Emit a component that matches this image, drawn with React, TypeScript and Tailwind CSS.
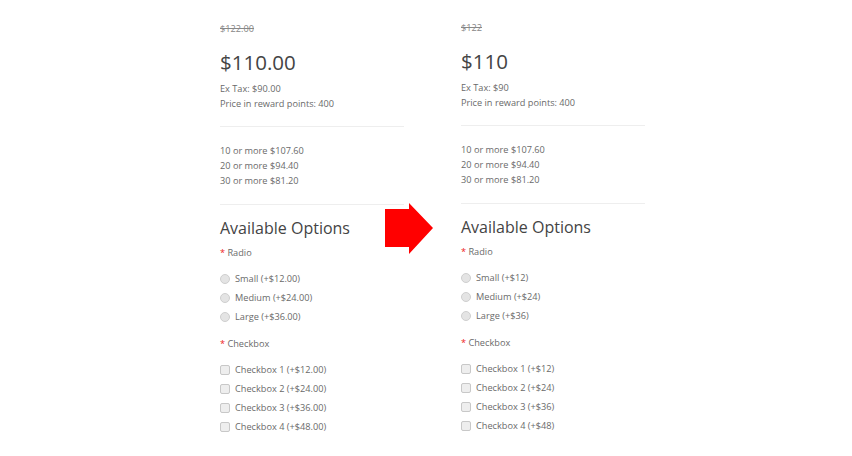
import React from "react";

type Col = {
  old: string;
  price: string;
  tax: string;
  radios: string[];
  checks: string[];
};

const cols: Col[] = [
  {
    old: "$122.00",
    price: "$110.00",
    tax: "$90.00",
    radios: ["Small (+$12.00)", "Medium (+$24.00)", "Large (+$36.00)"],
    checks: [
      "Checkbox 1 (+$12.00)",
      "Checkbox 2 (+$24.00)",
      "Checkbox 3 (+$36.00)",
      "Checkbox 4 (+$48.00)",
    ],
  },
  {
    old: "$122",
    price: "$110",
    tax: "$90",
    radios: ["Small (+$12)", "Medium (+$24)", "Large (+$36)"],
    checks: [
      "Checkbox 1 (+$12)",
      "Checkbox 2 (+$24)",
      "Checkbox 3 (+$36)",
      "Checkbox 4 (+$48)",
    ],
  },
];

function Column({ c, shift }: { c: Col; shift: boolean }) {
  return (
    <div className={`w-[184px] flex flex-col ${shift ? "-mt-px" : ""}`}>
      <div className="text-[9.2px] leading-[15px] text-[#888] line-through">{c.old}</div>
      <div className="mt-[12px] text-[20.5px] leading-[28px] text-[#444]">{c.price}</div>
      <div className="mt-[5px] text-[9.2px] leading-[15px]">Ex Tax: {c.tax}</div>
      <div className="text-[9.2px] leading-[15px]">Price in reward points: 400</div>
      <div className="mt-[15px] h-px bg-[#eeeeee]" />
      <div className="mt-[16px] text-[9.2px] leading-[15px]">10 or more $107.60</div>
      <div className="text-[9.2px] leading-[15px]">20 or more $94.40</div>
      <div className="text-[9.2px] leading-[15px]">30 or more $81.20</div>
      <div className="mt-[16px] h-px bg-[#eeeeee]" />
      <div className="mt-[11px] text-[16px] leading-[24px] text-[#444]">Available Options</div>
      <div className="mt-[5px] text-[9.2px] leading-[15px]">
        <span className="text-[#e22]">*</span> Radio
      </div>
      <div className="mt-[9px] flex flex-col">
        {c.radios.map((r) => (
          <div key={r} className="flex items-center h-[19px] text-[9.2px]">
            <span className="w-[10px] h-[10px] rounded-full border border-[#cfcfcf] bg-[#e4e4e4] mr-[5px]" />
            <span>{r}</span>
          </div>
        ))}
      </div>
      <div className="mt-[10px] text-[9.2px] leading-[15px]">
        <span className="text-[#e22]">*</span> Checkbox
      </div>
      <div className="mt-[9px] flex flex-col">
        {c.checks.map((r) => (
          <div key={r} className="flex items-center h-[19px] text-[9.2px]">
            <span className="w-[10px] h-[10px] rounded-[2px] border border-[#c8c8c8] bg-[#eeeeee] mr-[5px]" />
            <span>{r}</span>
          </div>
        ))}
      </div>
    </div>
  );
}

export default function App() {
  return (
    <div
      className="relative w-[852px] h-[456px] bg-white text-[#6a6a6a] overflow-hidden"
      style={{ fontFamily: '"Open Sans", sans-serif' }}
    >
      <div className="flex pl-[220px] pt-[21px] gap-[57px]">
        <Column c={cols[0]} shift={false} />
        <Column c={cols[1]} shift={true} />
      </div>
      <svg
        className="absolute left-[385px] top-[203px]"
        width="49"
        height="52"
        viewBox="0 0 49 52"
      >
        <polygon points="0,6 24,6 24,0 48,25 24,51 24,44 0,44" fill="#ff0000" />
      </svg>
    </div>
  );
}
